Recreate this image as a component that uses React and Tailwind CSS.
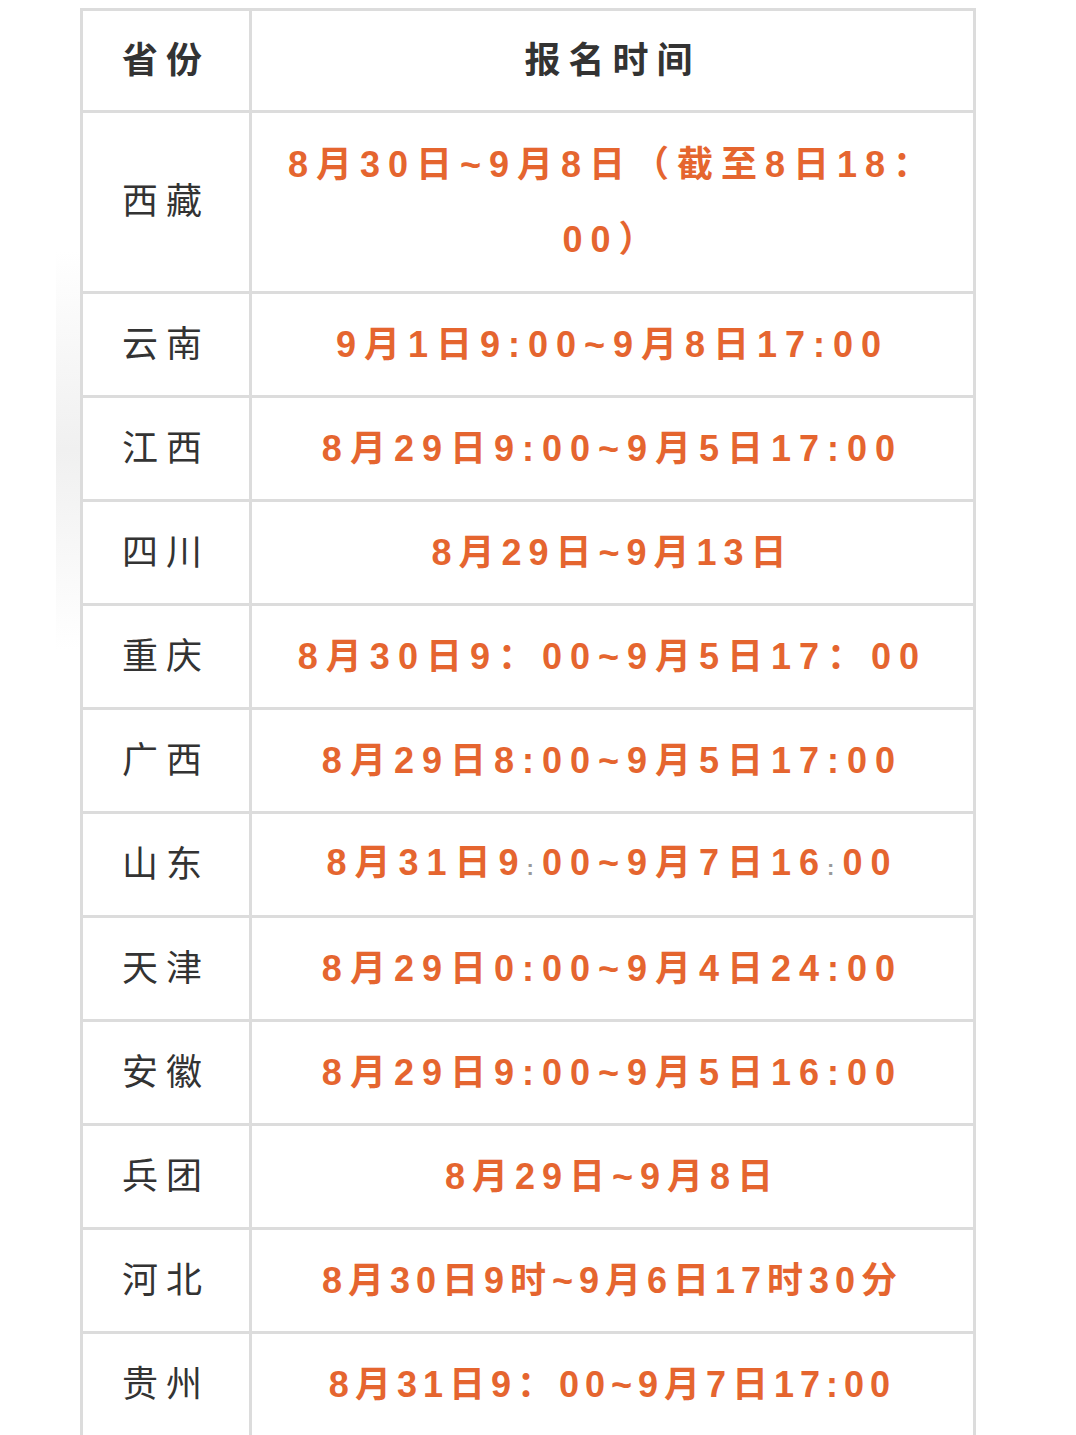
import React from "react";

const rows = [
  { p: "云南", t: "9月1日9:00~9月8日17:00" },
  { p: "江西", t: "8月29日9:00~9月5日17:00" },
  { p: "四川", t: "8月29日~9月13日", tight: true },
  { p: "重庆", t: "8月30日9：00~9月5日17：00" },
  { p: "广西", t: "8月29日8:00~9月5日17:00" },
  { p: "山东", t: "shandong" },
  { p: "天津", t: "8月29日0:00~9月4日24:00" },
  { p: "安徽", t: "8月29日9:00~9月5日16:00" },
  { p: "兵团", t: "8月29日~9月8日", tight: true },
  { p: "河北", t: "8月30日9时~9月6日17时30分", tighter: true },
  { p: "贵州", t: "8月31日9：00~9月7日17:00", tighter: true },
];

const font = { fontFamily: '"Liberation Sans", "Noto Sans CJK SC", sans-serif' };

function Time({ children, tracking = "tracking-[8px]" }) {
  return (
    <div
      className={`flex items-center justify-center bg-white text-[36px] font-bold ${tracking} text-[#e5652f] leading-[75px] text-center`}
    >
      {children}
    </div>
  );
}

export default function App() {
  return (
    <div className="relative min-h-[1435px] bg-white pt-2 pl-20 overflow-hidden" style={font}>
      {/* faint scan shadow on the left */}
      <div className="absolute left-[56px] top-[250px] w-[24px] h-[400px] bg-gradient-to-b from-white via-[#f0f0f0] to-white" />
      <div className="relative w-[896px] grid grid-cols-[166px_1fr] gap-[3px] p-[3px] bg-[#dcdcdc]">
        <div className="h-[99px] flex items-center justify-center bg-white text-[36px] font-bold tracking-[8px] text-[#333333]">
          省份
        </div>
        <div className="flex items-center justify-center bg-white text-[36px] font-bold tracking-[8px] text-[#333333]">
          报名时间
        </div>

        <div className="h-[178px] flex items-center justify-center bg-white text-[36px] tracking-[8px] text-[#333333]">
          西藏
        </div>
        <Time>
          <span>
            8月30日~9月8日（截至8日18：
            <br />
            00）
          </span>
        </Time>

        {rows.map((r) => (
          <React.Fragment key={r.p}>
            <div className="h-[101px] flex items-center justify-center bg-white text-[36px] tracking-[8px] text-[#333333]">
              {r.p}
            </div>
            <Time tracking={r.tighter ? "tracking-[6px]" : r.tight ? "tracking-[7px]" : "tracking-[8px]"}>
              {r.t === "shandong" ? (
                <span>
                  8月31日9<span className="text-[22px] text-[#999999]">:</span>00~9月7日16
                  <span className="text-[22px] text-[#999999]">:</span>00
                </span>
              ) : (
                r.t
              )}
            </Time>
          </React.Fragment>
        ))}
      </div>
    </div>
  );
}
